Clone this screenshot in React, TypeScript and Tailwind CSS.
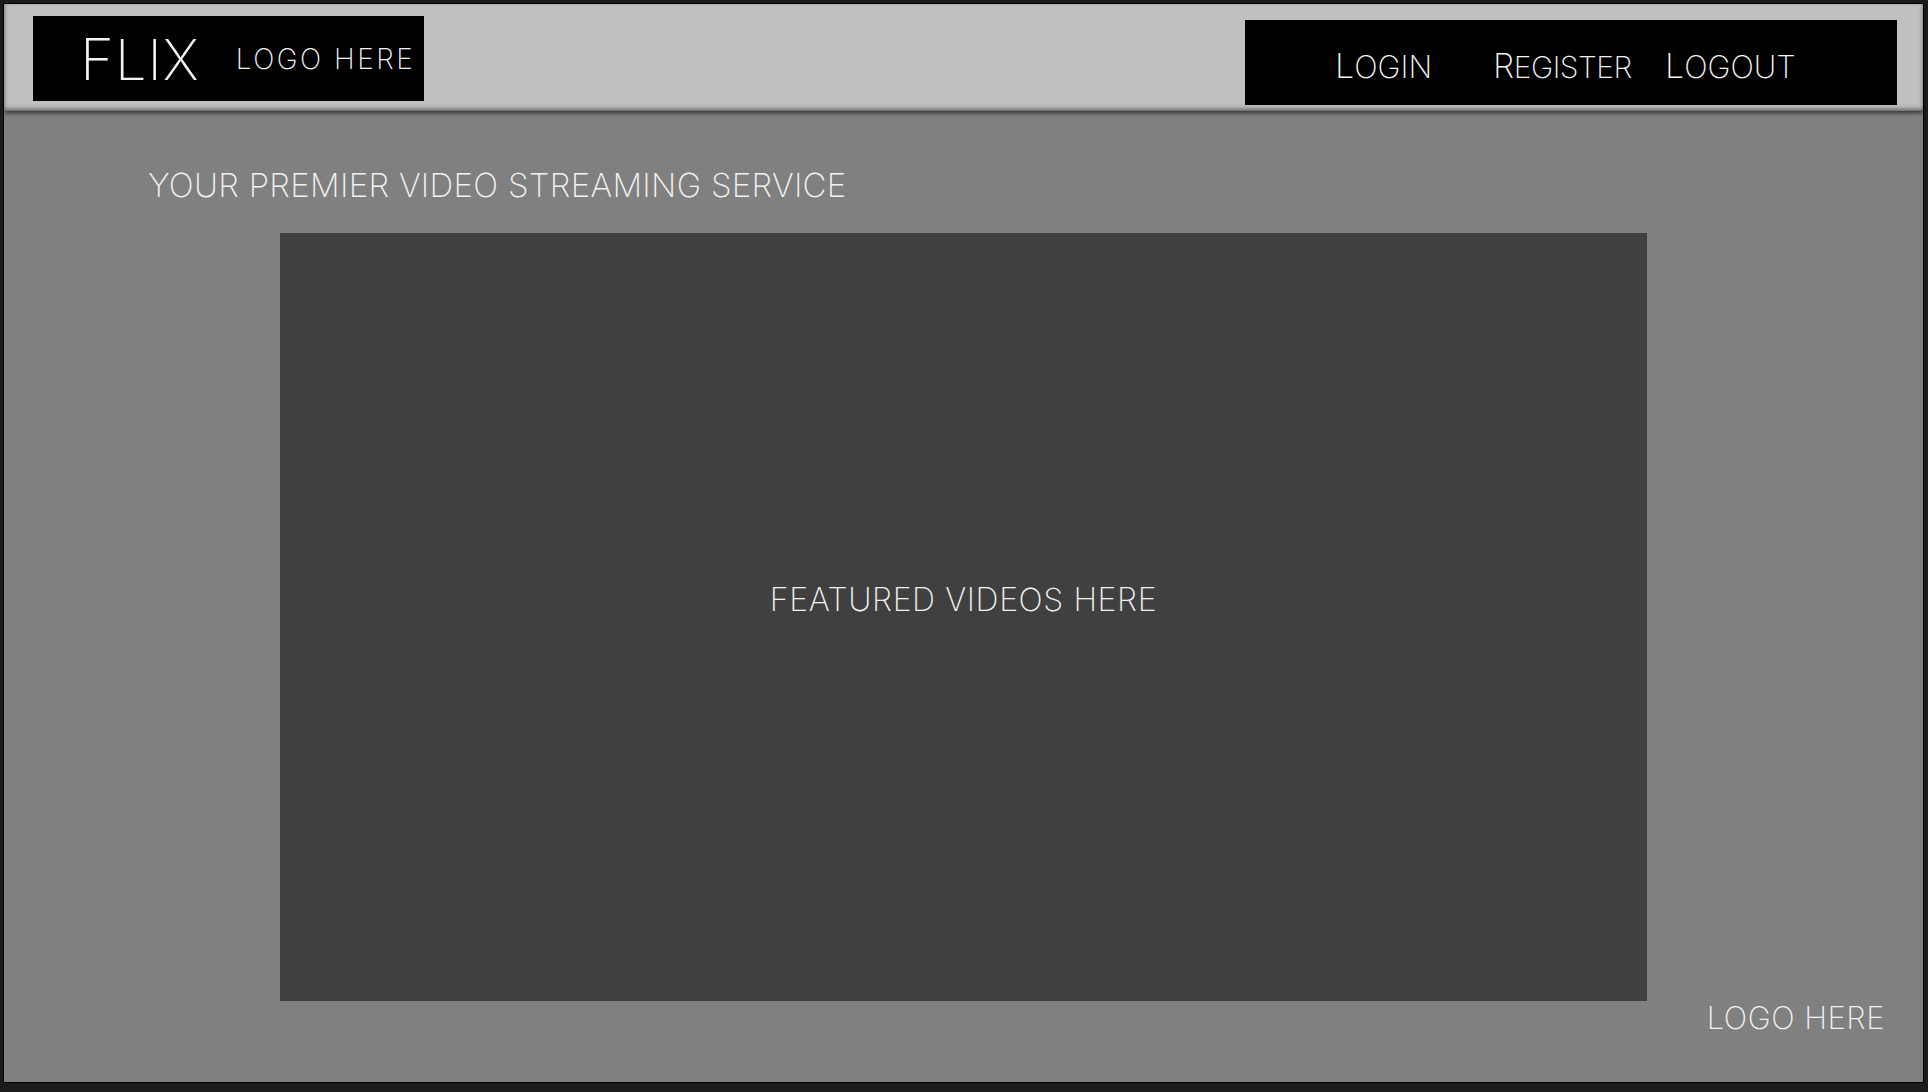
import React from "react";

const F = { fontFamily: "Inter, 'Open Sans', 'Liberation Sans', sans-serif" };

export default function App() {
  return (
    <div className="w-full h-[1092px] bg-[#1c1c1c] pt-[3px] pl-[3px] pr-[4px] pb-[9px]" style={F}>
      <div className="h-full w-full border border-black bg-[#808080] flex flex-col">
        <header className="h-[107px] shrink-0 bg-[#c0c0c0] flex justify-between items-start shadow-[0_2px_4px_rgba(0,0,0,0.6),0_-2px_4px_rgba(0,0,0,0.5)_inset] relative">
          <div className="mt-[12px] ml-[29px] w-[391px] h-[85px] bg-black flex items-center text-[#f2f2f2] font-extralight">
            <span className="ml-[47px] text-[58px] leading-none tracking-[1px]">
              F<span className="text-[56px]">LIX</span>
            </span>
            <span className="ml-[36px] text-[28px] leading-none tracking-[2.5px]">LOGO HERE</span>
          </div>
          <nav className="mt-[16px] mr-[26px] w-[652px] h-[85px] bg-black flex items-center text-[#f2f2f2] font-extralight text-[34px] leading-none pt-[6px] pl-[90px]">
            <span className="w-[158px] shrink-0">L<span className="text-[31px]">OGIN</span></span>
            <span className="w-[172px] shrink-0 tracking-[-0.5px]">R<span className="text-[30px]">EGISTER</span></span>
            <span className="shrink-0">L<span className="text-[31px]">OGOUT</span></span>
          </nav>
        </header>
        <main className="flex-1 flex flex-col text-[#f2f2f2] font-extralight">
          <p className="ml-[144px] mt-[58px] text-[33px] leading-none tracking-[0.3px]">YOUR PREMIER VIDEO STREAMING SERVICE</p>
          <div className="ml-[276px] mt-[31px] w-[1367px] h-[768px] bg-[#404040] flex items-center justify-center pb-[34px]">
            <span className="text-[32px] leading-none tracking-[0.6px]">FEATURED VIDEOS HERE</span>
          </div>
          <div className="flex justify-end pr-[38px] mt-[1px]">
            <span className="text-[31px] leading-none tracking-[0.5px]">LOGO HERE</span>
          </div>
        </main>
      </div>
    </div>
  );
}
